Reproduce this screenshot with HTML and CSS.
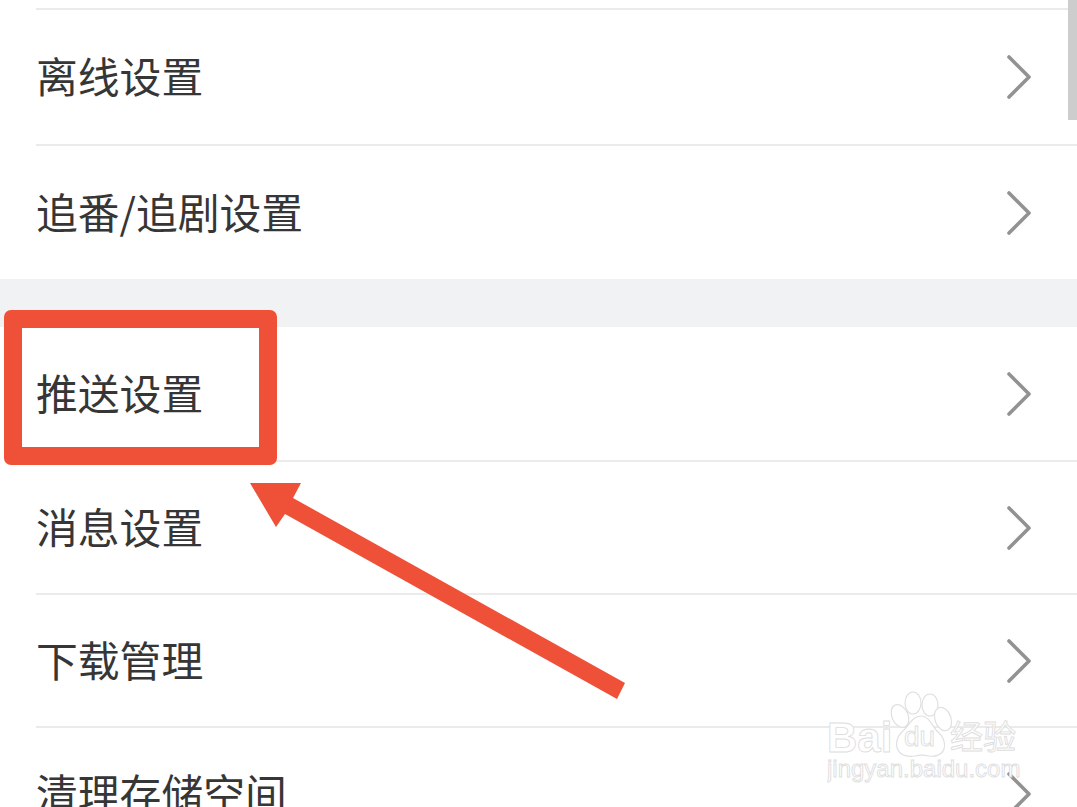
FILE: index.html
```html
<!DOCTYPE html>
<html lang="zh">
<head>
<meta charset="utf-8">
<title>设置</title>
<link rel="stylesheet" href="styles.css">
</head>
<body>
<main class="page">
  <div class="top-cut"></div>
  <ul class="group">
    <li class="row row-tall"><span class="label">离线设置</span><svg class="chev" viewBox="0 0 26 46"><path d="M3 3L23 23L3 43"/></svg></li>
    <li class="row row-last"><span class="label">追番/追剧设置</span><svg class="chev" viewBox="0 0 26 46"><path d="M3 3L23 23L3 43"/></svg></li>
  </ul>
  <div class="band"></div>
  <ul class="group">
    <li class="row row-mid"><span class="label">推送设置</span><svg class="chev" viewBox="0 0 26 46"><path d="M3 3L23 23L3 43"/></svg></li>
    <li class="row"><span class="label">消息设置</span><svg class="chev" viewBox="0 0 26 46"><path d="M3 3L23 23L3 43"/></svg></li>
    <li class="row"><span class="label">下载管理</span><svg class="chev" viewBox="0 0 26 46"><path d="M3 3L23 23L3 43"/></svg></li>
    <li class="row"><span class="label">清理存储空间</span><svg class="chev" viewBox="0 0 26 46"><path d="M3 3L23 23L3 43"/></svg></li>
  </ul>
  <div class="scrollbar"></div>
  <div class="redbox"></div>
  <svg class="arrow" viewBox="0 0 1077 807"><polygon points="250,483 301,483 293,498 625,683 617,699 285,514 276,527"/></svg>
  <svg class="watermark" viewBox="0 0 220 110">
    <g class="wm-shape">
      <ellipse cx="73" cy="26" rx="8" ry="12" transform="rotate(-25 73 26)"/>
      <ellipse cx="86" cy="13" rx="8" ry="11"/>
      <ellipse cx="103" cy="15" rx="8" ry="11"/>
      <ellipse cx="116" cy="29" rx="8" ry="12" transform="rotate(-20 116 29)"/>
      <path d="M94 26C85 26 82 36 76 41C70 46 68 54 71 60C74 66 82 67 88 66C92 65 97 65 102 66C108 67 115 65 117 59C119 53 116 46 111 42C105 37 103 26 94 26Z"/>
    </g>
    <text class="wm-text wm-bai" x="0" y="62">Bai</text>
    <text class="wm-text wm-du" x="77" y="56">du</text>
    <text class="wm-text wm-cn" x="123" y="59">经验</text>
    <text class="wm-text wm-url" x="0" y="87">jingyan.baidu.com</text>
  </svg>
</main>
</body>
</html>
```
FILE: styles.css
```css
* { box-sizing: border-box; }
html, body { margin: 0; padding: 0; background: #fff; }
.page {
  position: relative;
  width: 1077px;
  height: 807px;
  overflow: hidden;
  background: #fff;
  font-family: "Noto Sans CJK SC", "Noto Sans", sans-serif;
  color: #363636;
}
.top-cut {
  height: 10px;
  margin-left: 36px;
  border-bottom: 2px solid #ebebeb;
}
.group { list-style: none; margin: 0; padding: 0; }
.row {
  display: flex;
  align-items: center;
  justify-content: space-between;
  height: 133px;
  margin-left: 36px;
  padding-right: 45px;
  border-bottom: 2px solid #ebebeb;
}
.row-tall { height: 136px; }
.row-mid { height: 135px; }
.row-last { border-bottom: 0; }
.label { font-size: 41.8px; line-height: 1; margin-bottom: 2px; white-space: nowrap; }
.chev { width: 26px; height: 46px; flex: none; }
.chev path { fill: none; stroke: #929292; stroke-width: 3.6; stroke-linecap: round; stroke-linejoin: round; }
.band { height: 48px; background: #f0f2f4; }
.scrollbar {
  position: absolute;
  top: 0;
  right: 0;
  width: 9px;
  height: 120px;
  background: #cdcdcd;
}
.redbox {
  position: absolute;
  left: 4px;
  top: 310px;
  width: 273px;
  height: 155px;
  border: 18px solid #ee5038;
  border-radius: 7px;
}
.arrow { position: absolute; left: 0; top: 0; width: 1077px; height: 807px; }
.arrow polygon { fill: #ee5038; }
.watermark { position: absolute; left: 827px; top: 690px; width: 220px; height: 110px; }
.wm-shape ellipse, .wm-shape path { fill: #fff; stroke: #e0e0e0; stroke-width: 1.2; }
.wm-text { fill: #fff; stroke: #dedede; stroke-width: 0.9; font-family: "Liberation Sans", sans-serif; }
.wm-bai { font-size: 42px; font-weight: 700; }
.wm-du { font-size: 28px; }
.wm-cn { font-size: 33px; font-family: "Noto Sans CJK SC", sans-serif; }
.wm-url { font-size: 24px; }
```
